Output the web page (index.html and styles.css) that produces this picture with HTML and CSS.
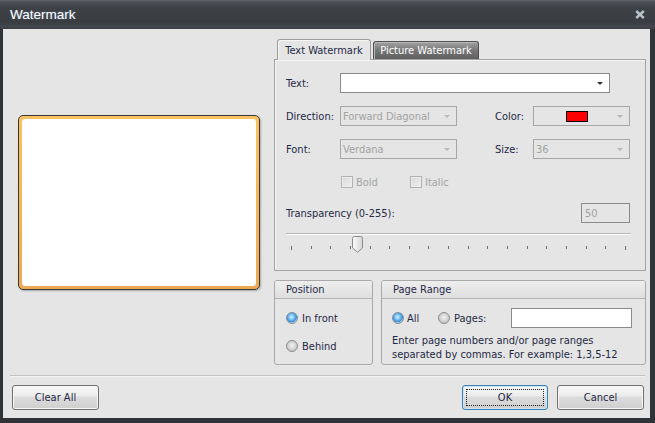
FILE: index.html
```html
<!DOCTYPE html>
<html>
<head>
<meta charset="utf-8">
<link rel="stylesheet" href="styles.css">
</head>
<body>
<div class="window">
  <div class="titlebar">
    <span class="title">Watermark</span>
    <svg class="close" width="10" height="9" viewBox="0 0 10 9"><path d="M1.2 1 L8.8 8 M8.8 1 L1.2 8" stroke="#b9c1cb" stroke-width="2.4" fill="none"/></svg>
  </div>
  <div class="client">
    <div class="main">
      <div class="preview-col">
        <div class="preview"><div class="preview-inner"></div></div>
      </div>
      <div class="right-col">
        <div class="tabs">
          <div class="tab active">Text Watermark</div>
          <div class="tab inactive">Picture Watermark</div>
        </div>
        <div class="tabpanel">
          <div class="row r-text">
            <span class="lbl">Text:</span>
            <div class="combo w-text"><span class="val"></span><span class="arrow"></span></div>
          </div>
          <div class="row r-gap">
            <span class="lbl">Direction:</span>
            <div class="combo disabled w-dir"><span class="val">Forward Diagonal</span><span class="arrow"></span></div>
            <span class="lbl2">Color:</span>
            <div class="combo disabled w-col"><span class="val swatch-wrap"><span class="swatch"></span></span><span class="arrow"></span></div>
          </div>
          <div class="row r-gap">
            <span class="lbl">Font:</span>
            <div class="combo disabled w-dir"><span class="val">Verdana</span><span class="arrow"></span></div>
            <span class="lbl2">Size:</span>
            <div class="combo disabled w-col"><span class="val">36</span><span class="arrow"></span></div>
          </div>
          <div class="row r-check">
            <span class="check-item c-bold"><span class="checkbox"></span>Bold</span>
            <span class="check-item"><span class="checkbox"></span>Italic</span>
          </div>
          <div class="row r-trans">
            <span class="grow">Transparency (0-255):</span>
            <div class="numbox">50</div>
          </div>
          <div class="slider">
            <div class="track"></div>
            <svg class="thumb" width="11" height="17" viewBox="0 0 11 17"><defs><linearGradient id="tg" x1="0" y1="0" x2="1" y2="0"><stop offset="0" stop-color="#fdfdfd"/><stop offset="1" stop-color="#d4d4d4"/></linearGradient></defs><path d="M0.5 2.5 Q0.5 0.5 2.5 0.5 L8.5 0.5 Q10.5 0.5 10.5 2.5 L10.5 12 L5.5 16.3 L0.5 12 Z" fill="url(#tg)" stroke="#8c8c8c"/></svg>
            <div class="ticks">
              <i class="big"></i><i></i><i></i><i></i><i></i><i></i><i></i><i></i><i></i><i></i><i></i><i></i><i></i><i></i><i></i><i></i><i></i><i class="big"></i>
            </div>
          </div>
        </div>
        <div class="groups">
          <div class="group g-pos">
            <div class="ghead">Position</div>
            <div class="gbody pos-body">
              <div class="radio-row"><span class="radio on"></span>In front</div>
              <div class="radio-row r2"><span class="radio"></span>Behind</div>
            </div>
          </div>
          <div class="group g-range">
            <div class="ghead">Page Range</div>
            <div class="gbody range-body">
              <div class="range-row">
                <span class="radio-item ri-all"><span class="radio on"></span>All</span>
                <span class="radio-item ri-pages"><span class="radio"></span>Pages:</span>
                <div class="pagebox"></div>
              </div>
              <div class="hint">Enter page numbers and/or page ranges<br>separated by commas. For example: 1,3,5-12</div>
            </div>
          </div>
        </div>
      </div>
    </div>
    <div class="sep"></div>
    <div class="buttons">
      <button class="btn">Clear All</button>
      <span class="grow"></span>
      <button class="btn ok"><span class="focus">OK</span></button>
      <button class="btn">Cancel</button>
    </div>
  </div>
</div>
</body>
</html>
```

FILE: styles.css
```css
* { box-sizing: border-box; }
body {
  margin: 0;
  font-family: "DejaVu Sans Condensed", "Liberation Sans", sans-serif;
  font-size: 11px;
  color: #1f2946;
}
.window {
  width: 655px;
  height: 423px;
  background: #2f3237;
  display: flex;
  flex-direction: column;
}
.titlebar {
  height: 29px;
  flex: none;
  display: flex;
  align-items: center;
  padding: 0 10px 1px 10px;
  background: linear-gradient(#63666c 0px, #4b4e54 2px, #3e4146 8px, #393c41 22px, #45484e 27px, #3a3d42 29px);
}
.title {
  flex: 1;
  color: #ffffff;
  font-family: "Liberation Sans", sans-serif;
  font-size: 13.5px;
  text-shadow: 0 0 2px rgba(150, 190, 255, 0.45);
}
.close { display: block; }
.client {
  flex: 1;
  margin: 0 5px 5px 3px;
  background: #e5e5e5;
  display: flex;
  flex-direction: column;
}
.main {
  display: flex;
  padding-top: 10px;
  height: 336px;
}
.preview-col {
  width: 271px;
  display: flex;
  align-items: center;
  padding-left: 15px;
}
.preview {
  width: 242px;
  height: 175px;
  border: 1px solid #383838;
  border-radius: 5px;
  padding: 3px;
  background: linear-gradient(#f8c262, #eda853);
  box-shadow: 1px 1px 2px rgba(0, 0, 0, 0.25);
}
.preview-inner {
  height: 100%;
  background: #ffffff;
  border-radius: 3px;
}
.right-col {
  width: 372px;
  display: flex;
  flex-direction: column;
}
.tabs {
  height: 20px;
  display: flex;
  align-items: flex-end;
  padding-left: 3px;
  gap: 2px;
  position: relative;
  z-index: 1;
}
.tab {
  display: flex;
  align-items: center;
  justify-content: center;
  border-radius: 3px 3px 0 0;
}
.tab.active {
  width: 94px;
  height: 21px;
  margin-bottom: -1px;
  background: #e5e5e5;
  border: 1px solid #9c9c9c;
  border-bottom: none;
  box-shadow: inset 1px 1px 0 #f6f6f6;
}
.tab.inactive {
  width: 106px;
  height: 18px;
  color: #ffffff;
  border: 1px solid #505050;
  border-bottom: none;
  background: linear-gradient(#a3a3a3, #7a7a7a 45%, #5e5e5e);
  box-shadow: inset 1px 1px 0 #b8b8b8;
}
.tabpanel {
  height: 212px;
  border: 1px solid #a3a3a3;
  background: #e5e5e5;
  padding: 13px 15px 0 11px;
  box-shadow: inset 1px 1px 0 #f4f4f4;
}
.row {
  display: flex;
  align-items: center;
}
.r-text { height: 20px; }
.r-gap { height: 20px; margin-top: 13px; }
.lbl { width: 54px; }
.lbl2 { width: 38px; margin-left: 38px; }
.combo {
  height: 20px;
  border: 1px solid #8b8b8b;
  background: #ffffff;
  display: flex;
  align-items: center;
  padding: 0 6px 0 2px;
}
.combo .val { flex: 1; }
.combo .arrow {
  width: 0;
  height: 0;
  border-left: 3px solid transparent;
  border-right: 3px solid transparent;
  border-top: 3px solid #333333;
  margin-top: 1px;
}
.combo.disabled {
  background: #e5e5e5;
  border-color: #a6a6a6;
  color: #a2a2a2;
}
.combo.disabled .arrow { border-top-color: #b8b8b8; }
.w-text { width: 270px; }
.w-dir { width: 117px; }
.w-col { width: 97px; }
.swatch-wrap {
  display: flex;
  justify-content: center;
}
.swatch {
  width: 22px;
  height: 11px;
  background: #ff0000;
  border: 1px solid #000000;
}
.r-check {
  height: 16px;
  margin-top: 15px;
  padding-left: 55px;
  color: #a4a4a4;
}
.check-item {
  display: flex;
  align-items: center;
  gap: 3px;
}
.c-bold { width: 69px; }
.checkbox {
  width: 12px;
  height: 12px;
  border: 1px solid #b3b3b3;
  background: linear-gradient(135deg, #d8d8d8, #f0f0f0);
  box-shadow: inset 0 0 0 1px #ececec;
}
.r-trans {
  height: 20px;
  margin-top: 13px;
}
.grow { flex: 1; }
.numbox {
  width: 49px;
  height: 20px;
  border: 1px solid #8b8b8b;
  color: #a2a2a2;
  padding-left: 3px;
  display: flex;
  align-items: center;
}
.slider {
  position: relative;
  height: 30px;
  margin-top: 4px;
}
.track {
  margin-top: 10px;
  height: 2px;
  border-top: 1px solid #b6b6b6;
  background: #ffffff;
  margin-right: -1px;
}
.thumb {
  position: absolute;
  left: 66px;
  top: 3px;
}
.ticks {
  display: flex;
  justify-content: space-between;
  align-items: flex-start;
  margin-top: 11px;
  padding: 0 4px 0 5px;
}
.ticks i {
  display: block;
  width: 1px;
  height: 3px;
  background: #6e6e6e;
}
.ticks i.big { height: 4px; }
.groups {
  display: flex;
  gap: 8px;
  margin-top: 9px;
  height: 85px;
}
.group {
  border: 1px solid #a9a9a9;
  border-radius: 3px;
  background: #e5e5e5;
  overflow: hidden;
}
.g-pos { width: 99px; }
.g-range { width: 265px; }
.ghead {
  height: 18px;
  line-height: 17px;
  padding-left: 11px;
  background: linear-gradient(#eeeeee, #dedede);
  border-bottom: 1px solid #b4b4b4;
}
.pos-body { padding: 11px 0 0 11px; }
.radio-row {
  display: flex;
  align-items: center;
  gap: 4px;
  height: 16px;
}
.radio-row.r2 { margin-top: 12px; }
.radio {
  width: 12px;
  height: 12px;
  border-radius: 50%;
  border: 1px solid #8d8d8d;
  background: radial-gradient(circle at 50% 45%, #f2f2f2 0, #d6d6d6 45%, #b4b4b4 100%);
  flex: none;
}
.radio.on {
  border-color: #7f8f9e;
  background: radial-gradient(circle at 45% 40%, #d9f1ff 0, #71bff2 35%, #3289d6 62%, #a9c2d8 66%, #e4e4e4 100%);
}
.range-body { padding: 9px 0 0 10px; }
.range-row {
  display: flex;
  align-items: center;
  height: 20px;
}
.radio-item {
  display: flex;
  align-items: center;
  gap: 3px;
}
.ri-all { width: 46px; }
.ri-pages { width: 73px; gap: 4px; }
.pagebox {
  width: 121px;
  height: 20px;
  border: 1px solid #8b8b8b;
  background: #ffffff;
}
.hint {
  margin-top: 6px;
  line-height: 14px;
}
.sep {
  height: 2px;
  margin: 10px 5px 0 7px;
  border-top: 1px solid #c2c2c2;
  background: #f2f2f2;
}
.buttons {
  display: flex;
  align-items: center;
  gap: 9px;
  margin-top: 8px;
  padding: 0 6px 0 9px;
  height: 25px;
}
.btn {
  width: 87px;
  height: 25px;
  font: inherit;
  color: #1f2946;
  border: 1px solid #707070;
  border-radius: 3px;
  background: linear-gradient(#f7f7f7 0%, #ececec 42%, #dcdcdc 50%, #cfcfcf 100%);
  box-shadow: inset 0 0 0 1px #f6f6f6;
  display: flex;
  align-items: center;
  justify-content: center;
  padding: 0;
}
.btn.ok {
  width: 86px;
  border-color: #3c7fb1;
  padding: 3px;
  box-shadow: inset 0 0 0 1px #cde6f7;
}
.focus {
  flex: 1;
  align-self: stretch;
  display: flex;
  align-items: center;
  justify-content: center;
  border: 1px dotted #202020;
}
```
